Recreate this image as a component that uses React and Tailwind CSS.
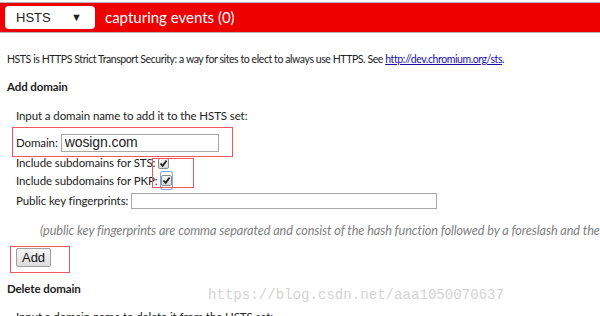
import React from "react";

function Check() {
  return (
    <span className="inline-flex w-[11px] h-[11px] items-center justify-center rounded-[2px] border border-[#8c8c8c] bg-gradient-to-b from-[#f4f4f4] to-[#d8d8d8] ml-[3px]">
      <svg width="9" height="9" viewBox="0 0 9 9">
        <path d="M1.5 4.5 L3.6 6.8 L7.6 1.6" fill="none" stroke="#222" strokeWidth="1.8" />
      </svg>
    </span>
  );
}

export default function App() {
  return (
    <div
      className="relative w-[600px] h-[316px] overflow-hidden bg-white text-[#222]"
      style={{ fontFamily: "Lato, 'Open Sans', sans-serif" }}
    >
      {/* top bar */}
      <div className="mt-[2px] h-[31px] border-y border-[#b5b5b5] bg-[#ee0000] flex items-center pl-[5px]">
        <div className="w-[90px] h-[23px] bg-white rounded-[4px] flex items-center justify-between pl-[11px] pr-[13px] text-[13px] text-[#222] font-['Liberation_Sans',sans-serif]">
          <span>HSTS</span>
          <span className="text-[11px]">▼</span>
        </div>
        <span className="ml-[10px] text-white text-[15px]">capturing events (0)</span>
      </div>

      <div className="pl-[7px] text-[11.5px] tracking-[-0.1px]">
        <p className="mt-[19px] leading-[14px] text-[10.5px] tracking-[-0.42px] whitespace-nowrap">
          HSTS is HTTPS Strict Transport Security: a way for sites to elect to always use HTTPS. See{" "}
          <a href="#" className="text-[#1a0dab] underline">http://dev.chromium.org/sts</a>.
        </p>
        <h3 className="mt-[14px] font-bold leading-[14px]">Add domain</h3>

        <div className="pl-[9px]">
          <p className="mt-[15px] leading-[14px]">Input a domain name to add it to the HSTS set:</p>
          <div className="mt-[10px] flex items-center h-[19px]">
            <span>Domain:</span>
            <input
              defaultValue="wosign.com"
              className="ml-[3px] w-[158px] h-[18px] border border-[#a9a9a9] px-[3px] text-[14px] font-['Liberation_Sans',sans-serif] text-[#222] outline-none"
            />
          </div>
          <div className="mt-[3px] flex items-center h-[16px]">
            <span>Include subdomains for STS:</span>
            <Check />
          </div>
          <div className="mt-[1px] flex items-center h-[17px]">
            <span>Include subdomains for PKP:</span>
            <span className="ring-1 ring-[#7aa7e6] rounded-[2px] inline-flex ml-[3px]">
              <span className="-ml-[3px]"><Check /></span>
            </span>
          </div>
          <div className="mt-[4px] flex items-center h-[16px]">
            <span>Public key fingerprints:</span>
            <input className="ml-[3px] w-[306px] h-[16px] border border-[#a9a9a9] outline-none" />
          </div>
          <p className="mt-[14px] pl-[24px] italic text-[#808080] text-[12.7px] whitespace-nowrap leading-[14px]">
            (public key fingerprints are comma separated and consist of the hash function followed by a foreslash and the base64 encoded fingerprint)
          </p>
          <button className="mt-[11px] w-[35px] h-[19px] border border-[#a0a0a0] rounded-[2px] bg-gradient-to-b from-[#f6f6f6] to-[#dcdcdc] text-[13px] font-['Liberation_Sans',sans-serif] text-[#111] leading-none">
            Add
          </button>
        </div>

        <h3 className="mt-[15px] font-bold leading-[14px]">Delete domain</h3>
        <p className="pl-[9px] mt-[14px] leading-[14px]">Input a domain name to delete it from the HSTS set:</p>
      </div>

      {/* red annotation boxes */}
      <div className="absolute left-[12px] top-[127px] w-[221px] h-[30px] border border-[#f0565f]" />
      <div className="absolute left-[152px] top-[158px] w-[42px] h-[30px] border border-[#f0565f]" />
      <div className="absolute left-[10px] top-[246px] w-[60px] h-[27px] border border-[#f0565f]" />

      {/* watermark */}
      <div className="absolute left-[208px] top-[285px] text-[14.1px] text-[#d4d4d4] font-['Liberation_Mono',monospace] whitespace-nowrap">
        https://blog.csdn.net/aaa1050070637
      </div>
    </div>
  );
}
